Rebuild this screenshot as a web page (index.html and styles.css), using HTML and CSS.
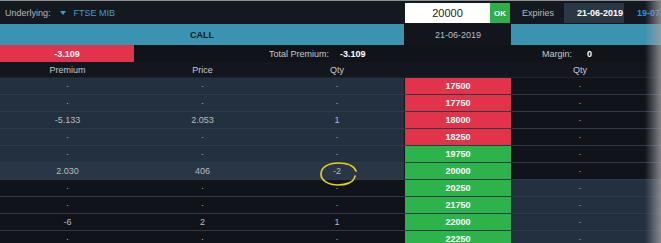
FILE: index.html
```html
<!DOCTYPE html>
<html lang="en">
<head>
  <meta charset="UTF-8">
  <title>Option Chain - FTSE MIB</title>
  <link rel="stylesheet" href="styles.css">
</head>
<body>
<div class="page">
  <div class="topbar">
    <div class="underlying">
      <span class="label">Underlying:</span>
      <span class="caret"></span>
      <span class="symbol">FTSE MIB</span>
    </div>
    <div class="strike-input">
      <input class="price-input" type="text" value="20000">
      <button class="ok-btn">OK</button>
    </div>
    <div class="expiries">
      <span class="exp-label">Expiries</span>
      <span class="exp-tab active">21-06-2019</span>
      <span class="exp-tab">19-07-2019</span>
    </div>
  </div>

  <div class="call-row">
    <div class="call-title">CALL</div>
    <div class="call-date">21-06-2019</div>
    <div class="call-rest"></div>
  </div>

  <div class="sum-row">
    <div class="sum-badge">-3.109</div>
    <div></div>
    <div class="sum-total"><span>Total Premium:</span><b>-3.109</b></div>
    <div></div>
    <div class="sum-margin"><span>Margin:</span><b>0</b></div>
  </div>

  <div class="grid head-row">
    <div>Premium</div>
    <div>Price</div>
    <div>Qty</div>
    <div></div>
    <div>Qty</div>
    <div></div>
  </div>

  <div class="rows">
    <div class="grid row itm">
      <div>·</div><div>·</div><div>·</div><div class="strike red">17500</div><div>·</div><div></div>
    </div>
    <div class="grid row itm">
      <div>·</div><div>·</div><div>·</div><div class="strike red">17750</div><div>·</div><div></div>
    </div>
    <div class="grid row itm">
      <div>-5.133</div><div>2.053</div><div>1</div><div class="strike red">18000</div><div>·</div><div></div>
    </div>
    <div class="grid row itm">
      <div>·</div><div>·</div><div>·</div><div class="strike red">18250</div><div>·</div><div></div>
    </div>
    <div class="grid row itm">
      <div>·</div><div>·</div><div>·</div><div class="strike green">19750</div><div>·</div><div></div>
    </div>
    <div class="grid row itm atm">
      <div>2.030</div><div>406</div><div class="marked">-2</div><div class="strike green">20000</div><div>·</div><div></div>
    </div>
    <div class="grid row otm">
      <div>·</div><div>·</div><div>·</div><div class="strike green">20250</div><div>·</div><div></div>
    </div>
    <div class="grid row otm">
      <div>·</div><div>·</div><div>·</div><div class="strike green">21750</div><div>·</div><div></div>
    </div>
    <div class="grid row otm">
      <div>-6</div><div>2</div><div>1</div><div class="strike green">22000</div><div>·</div><div></div>
    </div>
    <div class="grid row otm">
      <div>·</div><div>·</div><div>·</div><div class="strike green">22250</div><div>·</div><div></div>
    </div>
  </div>

  <!-- hand drawn mark around the -2 qty -->
  <svg class="circle-mark" width="40" height="26" viewBox="0 0 40 26">
    <path d="M36 15 C35 22 26 24 19 24 C10 24 2 20 2 13 C2 6 10 2 19 2 C28 2 35 5 37 10" fill="none" stroke="#e2cf1e" stroke-width="1.7" stroke-linecap="round"/>
  </svg>

  <div class="edge-fade"></div>
</div>
</body>
</html>
```

FILE: styles.css
```css
body {
  margin: 0;
  background: #12161c;
  font-family: "Liberation Sans", Arial, sans-serif;
  font-size: 9px;
  color: #b9bfc6;
  overflow: hidden;
}

.page {
  position: relative;
  width: 661px;
  height: 243px;
  overflow: hidden;
  border-top: 1px solid #8c8f93;
  box-sizing: border-box;
}

/* top bar */
.topbar {
  display: grid;
  grid-template-columns: 404px 107px 1fr;
  height: 23px;
  background: #14181f;
}

.underlying {
  display: flex;
  align-items: center;
  padding-left: 5px;
}

.underlying .label {
  color: #b3b8be;
}

.caret {
  width: 0;
  height: 0;
  border-left: 3px solid transparent;
  border-right: 3px solid transparent;
  border-top: 4px solid #3a9fd6;
  margin: 0 8px 0 9px;
}

.symbol {
  color: #3a9fd6;
}

.strike-input {
  display: flex;
  padding: 2px 0 1px 1px;
}

.price-input {
  width: 85px;
  height: 20px;
  box-sizing: border-box;
  border: none;
  margin: 0;
  padding: 0;
  text-align: center;
  font-family: inherit;
  font-size: 11px;
  color: #222;
  background: #fff;
}

.ok-btn {
  width: 20px;
  height: 20px;
  border: none;
  padding: 0;
  margin: 0;
  background: #2db04a;
  color: #fff;
  font-family: inherit;
  font-size: 8px;
  font-weight: bold;
}

.expiries {
  display: flex;
  align-items: stretch;
  padding: 2px 0 1px 0;
}

.exp-label {
  display: flex;
  align-items: center;
  padding: 0 10px 0 11px;
  color: #b5bac0;
}

.exp-tab {
  display: flex;
  align-items: center;
  padding: 0 9px 0 13px;
  color: #2f8fe8;
  font-weight: bold;
  white-space: nowrap;
}

.exp-tab.active {
  background: #2a3846;
  color: #fff;
  width: 60px;
  box-sizing: border-box;
}

/* call header */
.call-row {
  display: grid;
  grid-template-columns: 404px 107px 1fr;
  height: 21px;
  background: #3a93b0;
}

.call-title {
  display: flex;
  align-items: center;
  justify-content: center;
  color: #0f1a22;
  font-weight: bold;
}

.call-date {
  display: flex;
  align-items: center;
  justify-content: center;
  background: #12161c;
  border-left: 1px solid #0b0e12;
  color: #b7bcc2;
}

/* totals */
.sum-row {
  display: grid;
  grid-template-columns: 134px 135px 135px 107px 1fr;
  height: 17px;
  align-items: center;
  background: #101419;
  color: #c4c9ce;
}

.sum-badge {
  height: 17px;
  display: flex;
  align-items: center;
  justify-content: center;
  background: #e1344a;
  color: #fff;
  font-weight: bold;
}

.sum-total,
.sum-margin {
  display: flex;
  gap: 11px;
}

.sum-margin {
  padding-left: 31px;
  gap: 15px;
}

.sum-total b,
.sum-margin b {
  color: #fff;
}

/* table */
.grid {
  display: grid;
  grid-template-columns: 135px 135px 134px 107px 138px 1fr;
}

.head-row {
  height: 15px;
  align-items: center;
  text-align: center;
  background: #13171d;
  color: #c5cad0;
  border-bottom: 1px solid #1d242d;
}

.row {
  height: 16px;
  border-bottom: 1px solid #2e3a48;
  text-align: center;
  line-height: 16px;
  color: #b6bcc3;
}

.row.itm > div:nth-child(-n+3),
.row.otm > div:nth-child(n+5) {
  background: #233040;
}

.row.itm > div:nth-child(n+5),
.row.otm > div:nth-child(-n+3) {
  background: #10141a;
}

.row.atm > div:nth-child(-n+3) {
  background: #283646;
}

.strike {
  color: #fff;
  font-weight: bold;
  margin-left: 1px;
}

.strike.red {
  background: #e1344a;
}

.strike.green {
  background: #2db34b;
}

.circle-mark {
  position: absolute;
  left: 319px;
  top: 160px;
}

.edge-fade {
  position: absolute;
  top: 0;
  right: 0;
  width: 16px;
  height: 100%;
  background: linear-gradient(to right, rgba(150, 152, 156, 0), rgba(160, 162, 166, 0.8));
}
```
